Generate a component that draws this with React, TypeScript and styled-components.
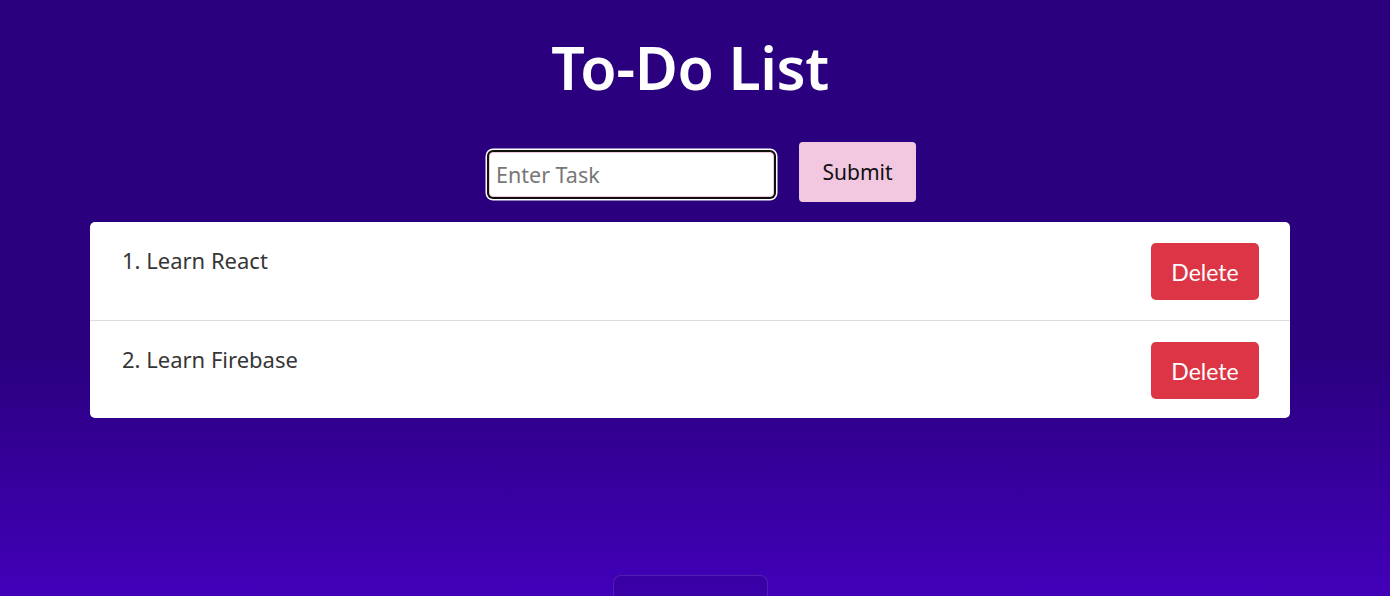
import React from "react";
import styled, { createGlobalStyle } from "styled-components";

const Global = createGlobalStyle`
  html, body { margin: 0; padding: 0; }
  body {
    font-family: "Noto Sans", "Open Sans", sans-serif;
    background: linear-gradient(to bottom, #2a007f 0%, #2a007f 56%, #4600c2 100%);
    min-height: 596px;
    overflow: hidden;
  }
`;

const Page = styled.div`
  display: flex;
  flex-direction: column;
  align-items: center;
  min-height: 596px;
  padding-right: 10px;
`;

const Title = styled.h1`
  margin: 27px 0 0;
  font-size: 59px;
  font-weight: 600;
  line-height: 80px;
  color: #ffffff;
  letter-spacing: -0.4px;
`;

const Form = styled.form`
  display: flex;
  align-items: center;
  gap: 25px;
  margin-top: 35px;
  padding-left: 25px;
`;

const TaskInput = styled.input`
  box-sizing: border-box;
  width: 285px;
  height: 45px;
  margin-top: 4px;
  padding: 0 6px;
  border: 1px solid #f2c8e0;
  background: #ffffff;
  font-family: "Noto Sans", sans-serif;
  font-size: 21.5px;
  color: #000;
  outline: none;
  box-shadow: 0 0 0 2px #101010, 0 0 0 3.5px #ffffff;
  border-radius: 4px;
  caret-color: #000;
  &::placeholder { color: #777; }
`;

const SubmitButton = styled.button`
  box-sizing: border-box;
  width: 117px;
  height: 60px;
  border: none;
  border-radius: 4px;
  background: #f2c8e0;
  color: #111;
  font-family: "Noto Sans", sans-serif;
  font-size: 21px;
  cursor: pointer;
`;

const Card = styled.ul`
  box-sizing: border-box;
  width: 1200px;
  margin: 20px 0 0;
  padding: 0;
  list-style: none;
  background: #ffffff;
  border-radius: 5px;
  overflow: hidden;
`;

const Row = styled.li<{ $first?: boolean }>`
  display: flex;
  justify-content: space-between;
  align-items: flex-start;
  height: 98px;
  box-sizing: border-box;
  padding: 21px 31px 0 32px;
  border-top: ${(p) => (p.$first ? "none" : "1px solid #dcdcdc")};
`;

const TaskText = styled.span`
  font-family: "Noto Sans", sans-serif;
  font-size: 22px;
  line-height: 34px;
  color: #363636;
`;

const DeleteButton = styled.button`
  width: 108px;
  height: 57px;
  border: none;
  border-radius: 5px;
  background: #dc3545;
  color: #fff;
  font-family: "Lato", sans-serif;
  font-size: 23px;
  cursor: pointer;
`;

const Footer = styled.div`
  width: 155px;
  height: 60px;
  margin-top: 157px;
  box-sizing: border-box;
  border: 1px solid rgba(255, 255, 255, 0.12);
  border-radius: 8px;
  background: rgba(20, 0, 80, 0.15);
`;

const tasks = ["Learn React", "Learn Firebase"];

export default function App() {
  return (
    <>
      <Global />
      <Page>
        <Title>To-Do List</Title>
        <Form onSubmit={(e) => e.preventDefault()}>
          <TaskInput placeholder="Enter Task" />
          <SubmitButton type="submit">Submit</SubmitButton>
        </Form>
        <Card>
          {tasks.map((t, i) => (
            <Row key={t} $first={i === 0}>
              <TaskText>
                {i + 1}. {t}
              </TaskText>
              <DeleteButton>Delete</DeleteButton>
            </Row>
          ))}
        </Card>
        <Footer />
      </Page>
    </>
  );
}
